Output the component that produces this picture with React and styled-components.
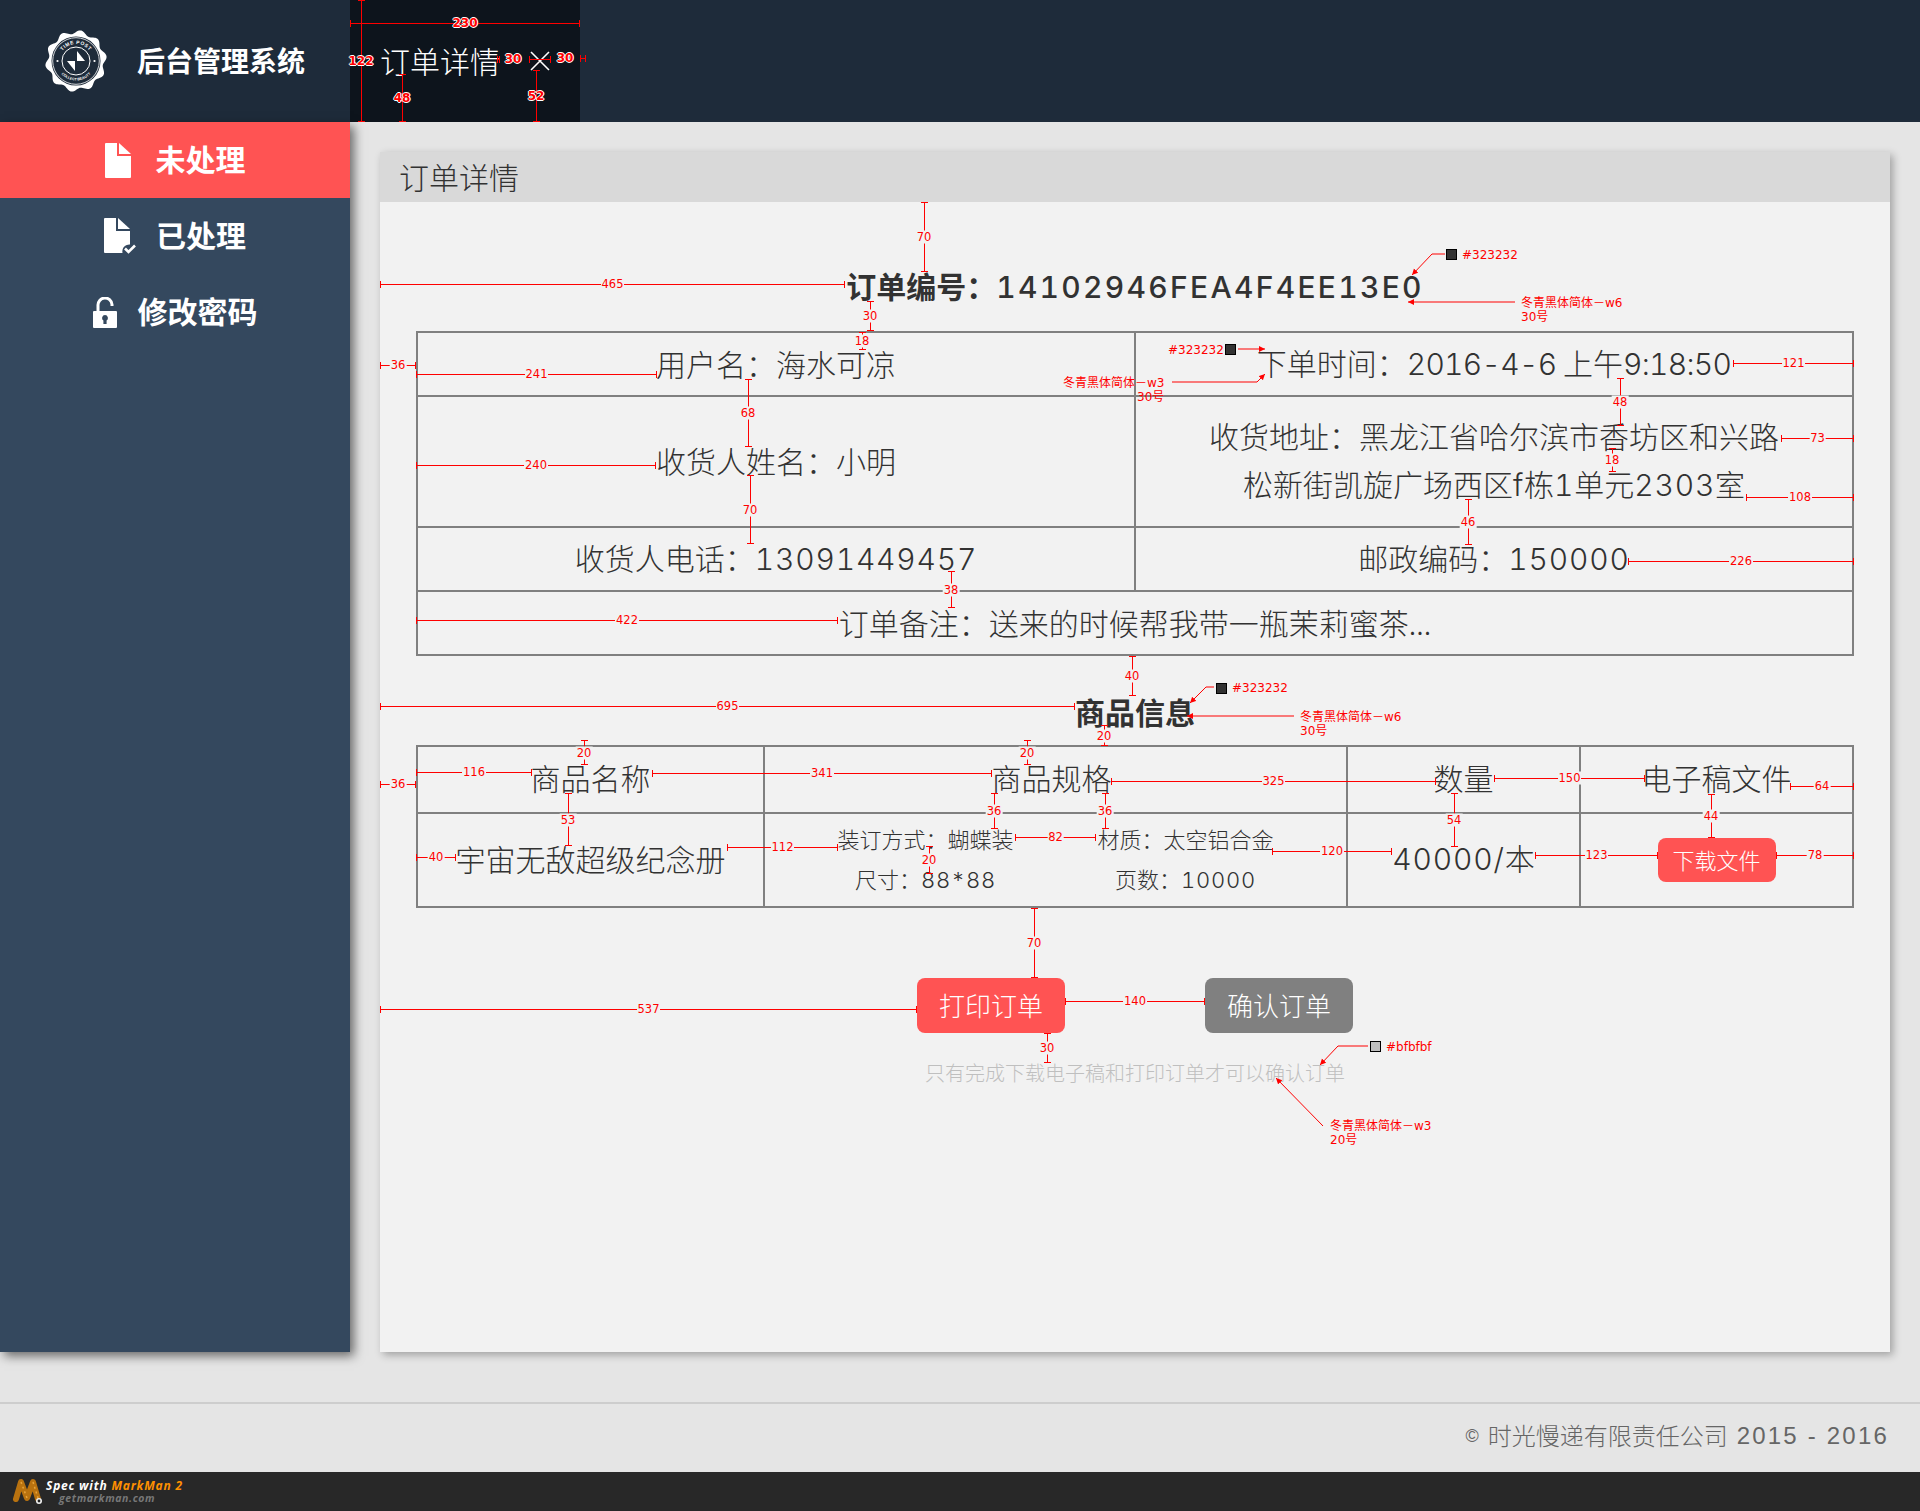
import React from "react";
import styled, { createGlobalStyle, css } from "styled-components";

const CJK = `"Noto Sans CJK SC", sans-serif`;
const RED = "#ff5353";
const INK = "#323232";
const LINE = "#808080";

const GlobalStyle = createGlobalStyle`
  html, body {
    margin: 0;
    padding: 0;
    background: #e5e5e5;
    font-family: ${CJK};
  }
  * { box-sizing: border-box; }
`;

const Page = styled.div`
  position: relative;
  width: 1920px;
  height: 1511px;
  display: flex;
  flex-direction: column;
  overflow: hidden;
  background: #e5e5e5;
`;

/* ---------- top bar ---------- */
const TopBar = styled.header`
  flex: none;
  height: 122px;
  display: flex;
  background: #1e2b3a;
`;

const Brand = styled.div`
  width: 350px;
  display: flex;
  align-items: center;
  gap: 30px;
  padding-left: 45px;
  color: #fff;
  font-size: 28px;
  font-weight: 700;
`;

const BrandName = styled.span`
  padding-bottom: 3px;
`;

const Tab = styled.div`
  width: 230px;
  display: flex;
  align-items: center;
  gap: 30px;
  padding-left: 30px;
  background: #0d141c;
  color: #fff;
  font-size: 30px;
  font-weight: 300;
`;

const TabName = styled.span`
  padding-bottom: 3px;
`;

/* ---------- body ---------- */
const Body = styled.div`
  flex: none;
  height: 1230px;
  display: flex;
`;

const Sidebar = styled.nav`
  flex: none;
  width: 350px;
  background: #34485e;
  box-shadow: 4px 4px 10px rgba(0, 0, 0, 0.55);
`;

const NavItem = styled.div`
  height: 76px;
  display: flex;
  align-items: center;
  justify-content: center;
  gap: ${(p) => p.$gap}px;
  color: #fff;
  font-size: 30px;
  font-weight: 700;
  background: ${(p) => (p.$active ? RED : "transparent")};
`;

const NavText = styled.span`
  padding-bottom: 4px;
`;

const Main = styled.main`
  flex: 1;
  display: flex;
  padding: 30px 30px 0;
`;

const Panel = styled.section`
  flex: 1;
  display: flex;
  flex-direction: column;
  background: #f2f2f2;
  box-shadow: 3px 3px 8px rgba(0, 0, 0, 0.3);
`;

const PanelHead = styled.div`
  flex: none;
  height: 50px;
  display: flex;
  align-items: center;
  padding: 0 0 2px 19px;
  background: #d9d9d9;
  color: ${INK};
  font-size: 30px;
  font-weight: 300;
`;

const PanelBody = styled.div`
  flex: 1;
  display: flex;
  flex-direction: column;
  align-items: center;
`;

const Heading = styled.h2`
  margin: ${(p) => p.$top}px 0 ${(p) => p.$bottom}px;
  height: 30px;
  line-height: 28px;
  font-size: 30px;
  font-weight: 700;
  color: ${INK};
  text-align: center;
  white-space: nowrap;
`;

const Num = styled.span`
  font-family: Inter, ${CJK};
  font-weight: ${(p) => (p.$bold ? 500 : 300)};
  font-variant-numeric: tabular-nums;
  letter-spacing: ${(p) => (p.$bold ? 2.3 : p.$tight ? -0.7 : 0.8)}px;
`;

const Grid = styled.table`
  width: 1436px;
  table-layout: fixed;
  border-collapse: collapse;
  color: ${INK};
  font-size: 30px;
  font-weight: 300;
  line-height: 48px;
`;

const Row = styled.tr`
  height: ${(p) => p.$h}px;
`;

const Cell = styled.td`
  padding: 0 ${(p) => p.$pr ?? 0}px ${(p) => p.$pb ?? 3}px 0;
  border: 2px solid ${LINE};
  text-align: center;
  vertical-align: middle;
  white-space: nowrap;
`;

const Specs = styled.div`
  width: 438px;
  margin: 0 auto;
  display: grid;
  grid-template-columns: 178px 178px;
  column-gap: 82px;
  font-size: 22px;
  line-height: 40px;
  white-space: nowrap;
`;

const Btn = styled.button`
  display: block;
  border: 0;
  padding: 0 0 2px;
  color: #fff;
  font-family: ${CJK};
  font-weight: 300;
  font-size: ${(p) => (p.$small ? 22 : 26)}px;
  width: ${(p) => (p.$small ? 118 : 148)}px;
  height: ${(p) => (p.$small ? 44 : 55)}px;
  border-radius: 8px;
  margin: ${(p) => (p.$small ? "0 auto" : 0)};
  background: ${(p) => (p.$muted ? "#808080" : RED)};
`;

const Actions = styled.div`
  margin-top: 70px;
  display: flex;
  gap: 140px;
`;

const Hint = styled.p`
  margin: 29px 0 0;
  line-height: 22px;
  font-size: 20px;
  font-weight: 300;
  color: #bfbfbf;
`;

/* ---------- footer ---------- */
const Footer = styled.footer`
  flex: none;
  margin-top: 50px;
  height: 70px;
  display: flex;
  align-items: center;
  justify-content: flex-end;
  padding: 0 31px 4px 0;
  border-top: 2px solid #cdcdcd;
  color: #666;
  font-size: 24px;
  font-weight: 300;
`;

const Company = styled.span`
  padding-bottom: 3px;
`;

const Year = styled.span`
  font-family: "Liberation Sans", sans-serif;
  letter-spacing: 2.2px;
  margin-left: 9px;
`;

const Copy = styled.span`
  font-family: "Liberation Sans", sans-serif;
  font-size: 18px;
  margin-right: 9px;
`;

const MarkBar = styled.div`
  flex: none;
  height: 39px;
  display: flex;
  align-items: center;
  gap: 3px;
  padding-left: 12px;
  background: #282828;
  font-family: "Open Sans", sans-serif;
  font-style: italic;
  font-weight: 700;
`;

const MarkText = styled.div`
  display: flex;
  flex-direction: column;
  font-size: 12px;
  line-height: 13px;
  color: #fff;
  letter-spacing: 0.8px;
`;

const Orange = styled.span`
  color: #ff9000;
`;

const MarkSite = styled.span`
  padding-left: 13px;
  font-size: 10.5px;
  letter-spacing: 0.6px;
  color: #777;
`;

/* ---------- spec annotations, laid over the page ---------- */
const Overlay = styled.div`
  position: absolute;
  inset: 0;
  pointer-events: none;
  font-family: "DejaVu Sans", sans-serif;
  color: #f00;
`;

const Rule = styled.div.attrs(({ $d, $x, $y, $len }) => ({
  style: $d === "h" ? { left: $x, top: $y, width: $len } : { left: $x, top: $y, height: $len },
}))`
  position: absolute;
  background: ${(p) => (p.$bare ? "transparent" : "#f00")};
  ${(p) =>
    p.$bare
      ? ""
      : p.$d === "h"
      ? css`
          height: 1px;
          &::before,
          &::after {
            content: "";
            position: absolute;
            top: -3px;
            width: 1px;
            height: 7px;
            background: #f00;
          }
          &::before { left: 0; }
          &::after { right: 0; }
        `
      : css`
          width: 1px;
          &::before,
          &::after {
            content: "";
            position: absolute;
            left: -3px;
            width: 7px;
            height: 1px;
            background: #f00;
          }
          &::before { top: 0; }
          &::after { bottom: 0; }
        `}
`;

const RuleLabel = styled.span.attrs(({ $at }) => ({ style: $at }))`
  position: absolute;
  transform: translate(-50%, -50%);
  font-size: 11.5px;
  line-height: 13px;
  ${(p) =>
    p.$onDark
      ? css`
          font-weight: 700;
          font-size: 12px;
          text-shadow: -1px 0 #fff, 1px 0 #fff, 0 -1px #fff, 0 1px #fff;
        `
      : css`
          background: #f2f2f2;
          padding: 0 1px;
        `}
`;

const Note = styled.span.attrs(({ $x, $y }) => ({ style: { left: $x, top: $y } }))`
  position: absolute;
  transform: translateY(-50%);
  font-family: "DejaVu Sans", ${CJK};
  font-size: 12px;
  line-height: 14px;
  white-space: nowrap;
`;

const Swatch = styled.i.attrs(({ $x, $y }) => ({ style: { left: $x, top: $y } }))`
  position: absolute;
  width: 11px;
  height: 11px;
  border: 1px solid #000;
  background: ${(p) => p.$c};
`;

const LeaderSvg = styled.svg`
  position: absolute;
  left: 0;
  top: 0;
`;

const rules = [
  // header tab
  { d: "h", x: 350, y: 23, len: 230, l: 230, dark: true },
  { d: "v", x: 361, y: 0, len: 122, l: 122, dark: true },
  { d: "h", x: 497, y: 59, len: 3 },
  { d: "h", x: 513, y: 59, len: 0, l: 30, dark: true, bare: true },
  { d: "h", x: 529, y: 59, len: 22 },
  { d: "h", x: 565, y: 58, len: 0, l: 30, dark: true, bare: true },
  { d: "h", x: 580, y: 58, len: 6 },
  { d: "v", x: 402, y: 74, len: 48, l: 48, dark: true },
  { d: "v", x: 536, y: 70, len: 52, l: 52, dark: true },
  // order table
  { d: "v", x: 924, y: 202, len: 70, l: 70 },
  { d: "h", x: 380, y: 284, len: 465, l: 465 },
  { d: "v", x: 870, y: 301, len: 30, l: 30 },
  { d: "v", x: 862, y: 332, len: 18, l: 18 },
  { d: "h", x: 380, y: 365, len: 36, l: 36 },
  { d: "h", x: 416, y: 374, len: 241, l: 241 },
  { d: "v", x: 748, y: 379, len: 68, l: 68 },
  { d: "h", x: 416, y: 465, len: 240, l: 240 },
  { d: "v", x: 750, y: 475, len: 69, l: 70 },
  { d: "v", x: 951, y: 571, len: 37, l: 38 },
  { d: "h", x: 416, y: 620, len: 422, l: 422 },
  { d: "h", x: 1733, y: 363, len: 121, l: 121 },
  { d: "v", x: 1620, y: 378, len: 48, l: 48 },
  { d: "h", x: 1781, y: 438, len: 73, l: 73 },
  { d: "v", x: 1612, y: 448, len: 24, l: 18 },
  { d: "h", x: 1746, y: 497, len: 108, l: 108 },
  { d: "v", x: 1468, y: 499, len: 46, l: 46 },
  { d: "h", x: 1628, y: 561, len: 226, l: 226 },
  { d: "v", x: 1132, y: 656, len: 40, l: 40 },
  // goods table
  { d: "h", x: 380, y: 706, len: 695, l: 695 },
  { d: "v", x: 1104, y: 725, len: 21, l: 20 },
  { d: "v", x: 584, y: 740, len: 25, l: 20 },
  { d: "v", x: 1027, y: 740, len: 25, l: 20 },
  { d: "h", x: 380, y: 784, len: 36, l: 36 },
  { d: "h", x: 416, y: 772, len: 116, l: 116 },
  { d: "h", x: 652, y: 773, len: 340, l: 341 },
  { d: "v", x: 568, y: 793, len: 53, l: 53 },
  { d: "v", x: 994, y: 793, len: 36, l: 36 },
  { d: "v", x: 1105, y: 793, len: 36, l: 36 },
  { d: "h", x: 416, y: 857, len: 40, l: 40 },
  { d: "h", x: 727, y: 847, len: 111, l: 112 },
  { d: "h", x: 1015, y: 837, len: 81, l: 82 },
  { d: "v", x: 929, y: 846, len: 28, l: 20 },
  { d: "h", x: 1111, y: 781, len: 325, l: 325 },
  { d: "h", x: 1494, y: 778, len: 151, l: 150 },
  { d: "h", x: 1790, y: 786, len: 64, l: 64 },
  { d: "v", x: 1454, y: 793, len: 54, l: 54 },
  { d: "v", x: 1711, y: 794, len: 44, l: 44 },
  { d: "h", x: 1272, y: 851, len: 120, l: 120 },
  { d: "h", x: 1535, y: 855, len: 123, l: 123 },
  { d: "h", x: 1776, y: 855, len: 78, l: 78 },
  // buttons
  { d: "v", x: 1034, y: 908, len: 70, l: 70 },
  { d: "h", x: 380, y: 1009, len: 537, l: 537 },
  { d: "h", x: 1065, y: 1001, len: 140, l: 140 },
  { d: "v", x: 1047, y: 1033, len: 30, l: 30 },
];

const notes = [
  { x: 1462, y: 255, t: "#323232" },
  { x: 1521, y: 303, t: "冬青黑体简体－w6" },
  { x: 1521, y: 317, t: "30号" },
  { x: 1168, y: 350, t: "#323232" },
  { x: 1063, y: 383, t: "冬青黑体简体－w3" },
  { x: 1137, y: 397, t: "30号" },
  { x: 1232, y: 688, t: "#323232" },
  { x: 1300, y: 717, t: "冬青黑体简体－w6" },
  { x: 1300, y: 731, t: "30号" },
  { x: 1386, y: 1047, t: "#bfbfbf" },
  { x: 1330, y: 1126, t: "冬青黑体简体－w3" },
  { x: 1330, y: 1140, t: "20号" },
];

const leaders = [
  "1445,254 1432,254 1412,275",
  "1515,302 1408,302",
  "1238,349 1265,349",
  "1172,382 1257,382 1265,374",
  "1214,687 1206,687 1190,703",
  "1294,716 1187,716",
  "1368,1046 1338,1046 1320,1065",
  "1323,1126 1276,1078",
];

const Leaders = () => (
  <LeaderSvg width="1920" height="1511" viewBox="0 0 1920 1511">
    <defs>
      <marker id="tip" markerWidth="7" markerHeight="7" refX="6" refY="3" orient="auto">
        <path d="M0 0L6 3L0 6Z" fill="#f00" />
      </marker>
    </defs>
    {leaders.map((pts) => (
      <polyline key={pts} points={pts} fill="none" stroke="#f00" strokeWidth="1" markerEnd="url(#tip)" />
    ))}
  </LeaderSvg>
);

const Annotations = () => (
  <Overlay>
    {rules.map((r) => (
      <Rule key={`${r.d}${r.x}-${r.y}`} $d={r.d} $x={r.x} $y={r.y} $len={r.len} $bare={r.bare}>
        {r.l && (
          <RuleLabel $onDark={r.dark} $at={r.d === "h" ? { left: "50%", top: 0 } : { left: 0, top: "50%" }}>
            {r.l}
          </RuleLabel>
        )}
      </Rule>
    ))}
    <Leaders />
    <Swatch $x={1446} $y={249} $c={INK} />
    <Swatch $x={1225} $y={344} $c={INK} />
    <Swatch $x={1216} $y={683} $c={INK} />
    <Swatch $x={1370} $y={1041} $c="#bfbfbf" />
    {notes.map((n) => (
      <Note key={`${n.x}-${n.y}`} $x={n.x} $y={n.y}>
        {n.t}
      </Note>
    ))}
  </Overlay>
);

/* ---------- drawings ---------- */
const scallop = (() => {
  const pts = [];
  for (let i = 0; i < 180; i++) {
    const a = (i / 180) * Math.PI * 2;
    const r = 29 + 1.9 * Math.cos(a * 10 + Math.PI / 2);
    pts.push(`${(31 + r * Math.cos(a)).toFixed(2)},${(31 + r * Math.sin(a)).toFixed(2)}`);
  }
  return pts.join(" ");
})();

const Seal = () => (
  <svg width="62" height="62" viewBox="0 0 62 62">
    <polygon points={scallop} fill="#fff" />
    <circle cx="31" cy="31" r="24.5" fill="#1e2b3a" />
    <circle cx="31" cy="31" r="23.3" fill="none" stroke="#fff" strokeWidth="0.8" />
    <circle cx="31" cy="31" r="14" fill="none" stroke="#fff" strokeWidth="1" />
    <circle cx="12.5" cy="31" r="1.1" fill="#fff" />
    <circle cx="49.5" cy="31" r="1.1" fill="#fff" />
    <path d="M32 21L40 31H32Z M22 31H30V41Z" fill="#fff" />
    <defs>
      <path id="sealTop" d="M14 31A17 17 0 0 1 48 31" />
      <path id="sealBottom" d="M11.5 31A19.5 19.5 0 0 0 50.5 31" />
    </defs>
    <text fontFamily="Liberation Sans, sans-serif" fontSize="5" fill="#fff" letterSpacing="0.5" textAnchor="middle">
      <textPath href="#sealTop" startOffset="50%">TIME POST</textPath>
    </text>
    <text fontFamily="Liberation Sans, sans-serif" fontSize="3.6" fill="#fff" textAnchor="middle">
      <textPath href="#sealBottom" startOffset="50%">COLLECT BEAUTY</textPath>
    </text>
  </svg>
);

const Cross = () => (
  <svg width="20" height="20" viewBox="0 0 20 20">
    <path d="M1 1L19 19M19 1L1 19" stroke="#fff" strokeWidth="1.6" fill="none" />
  </svg>
);

const FileIcon = () => (
  <svg width="26" height="35" viewBox="0 0 26 35">
    <path d="M1 0H12V13H26V34a1 1 0 0 1-1 1H1a1 1 0 0 1-1-1V1a1 1 0 0 1 1-1Z" fill="#fff" />
    <path d="M14 0L26 11H14Z" fill="#fff" />
  </svg>
);

const FileDoneIcon = () => (
  <svg width="32" height="36" viewBox="0 0 32 36">
    <path d="M1 0H12V13H26V26.5a7 7 0 0 0-7.5 8.5H1a1 1 0 0 1-1-1V1a1 1 0 0 1 1-1Z" fill="#fff" />
    <path d="M14 0L26 11H14Z" fill="#fff" />
    <path d="M21 30.5L24.5 34L31 27.5" stroke="#fff" strokeWidth="2.6" fill="none" />
  </svg>
);

const LockIcon = () => (
  <svg width="24" height="31" viewBox="0 0 24 31">
    <path d="M5 15V8.5a7 7 0 0 1 14-1V9" stroke="#fff" strokeWidth="3" fill="none" />
    <path
      fillRule="evenodd"
      d="M1 14H23a1 1 0 0 1 1 1V30a1 1 0 0 1-1 1H1a1 1 0 0 1-1-1V15a1 1 0 0 1 1-1ZM12 18a3 3 0 0 0-1.6 5.5V27h3.2v-3.5A3 3 0 0 0 12 18Z"
      fill="#fff"
    />
  </svg>
);

const MarkLogo = () => (
  <svg width="31" height="27" viewBox="0 0 31 27">
    <path d="M4 21L9 4L15 20L21 4L26 21" fill="none" stroke="#b9720f" strokeWidth="6" strokeLinecap="round" strokeLinejoin="round" />
    <path d="M9 4L15 20M21 4L26 20" fill="none" stroke="#e8a33a" strokeWidth="1.5" strokeDasharray="2 3" />
    <circle cx="27" cy="23" r="3" fill="#eee" />
    <circle cx="27" cy="23" r="1.4" fill="#222" />
  </svg>
);

/* ---------- page ---------- */
const App = () => (
  <Page>
    <GlobalStyle />
    <TopBar>
      <Brand>
        <Seal />
        <BrandName>后台管理系统</BrandName>
      </Brand>
      <Tab>
        <TabName>订单详情</TabName>
        <Cross />
      </Tab>
    </TopBar>

    <Body>
      <Sidebar>
        <NavItem $active $gap={25}>
          <FileIcon />
          <NavText>未处理</NavText>
        </NavItem>
        <NavItem $gap={20}>
          <FileDoneIcon />
          <NavText>已处理</NavText>
        </NavItem>
        <NavItem $gap={21}>
          <LockIcon />
          <NavText>修改密码</NavText>
        </NavItem>
      </Sidebar>

      <Main>
        <Panel>
          <PanelHead>订单详情</PanelHead>
          <PanelBody>
            <Heading $top={69} $bottom={30}>
              订单编号：<Num $bold>14102946FEA4F4EE13E0</Num>
            </Heading>
            <Grid>
              <colgroup>
                <col width="718" />
                <col width="718" />
              </colgroup>
              <tbody>
                <Row $h={64}>
                  <Cell>用户名：海水可凉</Cell>
                  <Cell>
                    下单时间：<Num $tight>2016-4-6</Num> 上午<Num $tight>9:18:50</Num>
                  </Cell>
                </Row>
                <Row $h={131}>
                  <Cell>收货人姓名：小明</Cell>
                  <Cell>
                    收货地址：黑龙江省哈尔滨市香坊区和兴路
                    <br />
                    松新街凯旋广场西区<Num>f</Num>栋<Num>1</Num>单元<Num>2303</Num>室
                  </Cell>
                </Row>
                <Row $h={64}>
                  <Cell>
                    收货人电话：<Num>13091449457</Num>
                  </Cell>
                  <Cell>
                    邮政编码：<Num>150000</Num>
                  </Cell>
                </Row>
                <Row $h={64}>
                  <Cell colSpan={2}>订单备注：送来的时候帮我带一瓶茉莉蜜茶...</Cell>
                </Row>
              </tbody>
            </Grid>

            <Heading $top={41} $bottom={18}>
              商品信息
            </Heading>
            <Grid>
              <colgroup>
                <col width="347" />
                <col width="583" />
                <col width="233" />
                <col width="273" />
              </colgroup>
              <tbody>
                <Row $h={67}>
                  <Cell $pb={5}>商品名称</Cell>
                  <Cell $pb={5} $pr={8}>商品规格</Cell>
                  <Cell $pb={5}>数量</Cell>
                  <Cell $pb={5}>电子稿文件</Cell>
                </Row>
                <Row $h={94}>
                  <Cell $pb={5}>宇宙无敌超级纪念册</Cell>
                  <Cell>
                    <Specs>
                      <span>装订方式：蝴蝶装</span>
                      <span>材质：太空铝合金</span>
                      <span>
                        尺寸：<Num>88*88</Num>
                      </span>
                      <span>
                        页数：<Num>10000</Num>
                      </span>
                    </Specs>
                  </Cell>
                  <Cell $pb={5}>
                    <Num>40000/</Num>本
                  </Cell>
                  <Cell $pb={0}>
                    <Btn $small>下载文件</Btn>
                  </Cell>
                </Row>
              </tbody>
            </Grid>

            <Actions>
              <Btn>打印订单</Btn>
              <Btn $muted>确认订单</Btn>
            </Actions>
            <Hint>只有完成下载电子稿和打印订单才可以确认订单</Hint>
          </PanelBody>
        </Panel>
      </Main>
    </Body>

    <Footer>
      <Copy>©</Copy>
      <Company>时光慢递有限责任公司</Company>
      <Year>2015 - 2016</Year>
    </Footer>

    <MarkBar>
      <MarkLogo />
      <MarkText>
        <span>
          Spec with <Orange>MarkMan 2</Orange>
        </span>
        <MarkSite>getmarkman.com</MarkSite>
      </MarkText>
    </MarkBar>

    <Annotations />
  </Page>
);

export default App;
